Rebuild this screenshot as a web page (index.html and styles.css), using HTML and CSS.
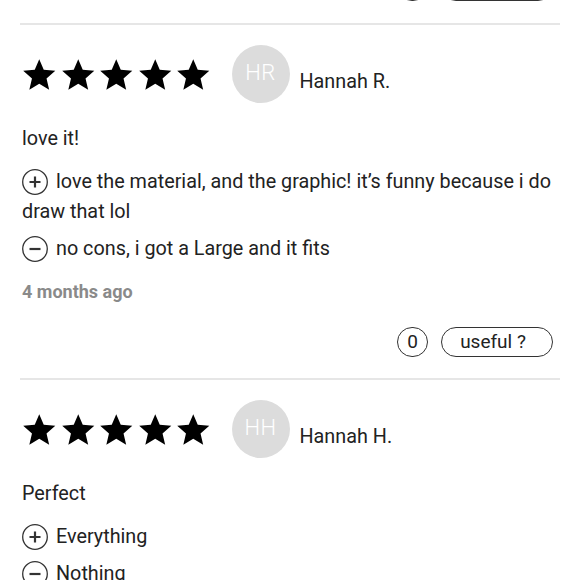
FILE: index.html
```html
<!DOCTYPE html>
<html>
<head>
<meta charset="utf-8">
<link rel="stylesheet" href="styles.css">
</head>
<body>
<div class="list">
  <div class="tail">
    <div class="actions">
      <span class="count">0</span>
      <span class="useful">useful ?</span>
    </div>
  </div>

  <div class="review">
    <div class="head">
      <div class="stars">
        <svg viewBox="0 0 24 24"><path d="M12 17.27L18.18 21l-1.64-7.03L22 9.24l-7.19-.61L12 2 9.19 8.63 2 9.24l5.46 4.73L5.82 21z"/></svg>
        <svg viewBox="0 0 24 24"><path d="M12 17.27L18.18 21l-1.64-7.03L22 9.24l-7.19-.61L12 2 9.19 8.63 2 9.24l5.46 4.73L5.82 21z"/></svg>
        <svg viewBox="0 0 24 24"><path d="M12 17.27L18.18 21l-1.64-7.03L22 9.24l-7.19-.61L12 2 9.19 8.63 2 9.24l5.46 4.73L5.82 21z"/></svg>
        <svg viewBox="0 0 24 24"><path d="M12 17.27L18.18 21l-1.64-7.03L22 9.24l-7.19-.61L12 2 9.19 8.63 2 9.24l5.46 4.73L5.82 21z"/></svg>
        <svg viewBox="0 0 24 24"><path d="M12 17.27L18.18 21l-1.64-7.03L22 9.24l-7.19-.61L12 2 9.19 8.63 2 9.24l5.46 4.73L5.82 21z"/></svg>
      </div>
      <div class="avatar">HR</div>
      <div class="name">Hannah R.</div>
    </div>
    <p class="title">love it!</p>
    <p class="point"><svg class="sign" viewBox="0 0 30 30"><circle cx="15" cy="15" r="12.3"/><path d="M15 9.5v11M9.5 15h11"/></svg>love the material, and the graphic! it’s funny because i do draw that lol</p>
    <p class="point"><svg class="sign" viewBox="0 0 30 30"><circle cx="15" cy="15" r="12.3"/><path d="M9.5 15h11"/></svg>no cons, i got a Large and it fits</p>
    <p class="date">4 months ago</p>
    <div class="actions">
      <span class="count">0</span>
      <span class="useful">useful ?</span>
    </div>
  </div>

  <div class="review">
    <div class="head">
      <div class="stars">
        <svg viewBox="0 0 24 24"><path d="M12 17.27L18.18 21l-1.64-7.03L22 9.24l-7.19-.61L12 2 9.19 8.63 2 9.24l5.46 4.73L5.82 21z"/></svg>
        <svg viewBox="0 0 24 24"><path d="M12 17.27L18.18 21l-1.64-7.03L22 9.24l-7.19-.61L12 2 9.19 8.63 2 9.24l5.46 4.73L5.82 21z"/></svg>
        <svg viewBox="0 0 24 24"><path d="M12 17.27L18.18 21l-1.64-7.03L22 9.24l-7.19-.61L12 2 9.19 8.63 2 9.24l5.46 4.73L5.82 21z"/></svg>
        <svg viewBox="0 0 24 24"><path d="M12 17.27L18.18 21l-1.64-7.03L22 9.24l-7.19-.61L12 2 9.19 8.63 2 9.24l5.46 4.73L5.82 21z"/></svg>
        <svg viewBox="0 0 24 24"><path d="M12 17.27L18.18 21l-1.64-7.03L22 9.24l-7.19-.61L12 2 9.19 8.63 2 9.24l5.46 4.73L5.82 21z"/></svg>
      </div>
      <div class="avatar">HH</div>
      <div class="name">Hannah H.</div>
    </div>
    <p class="title">Perfect</p>
    <p class="point"><svg class="sign" viewBox="0 0 30 30"><circle cx="15" cy="15" r="12.3"/><path d="M15 9.5v11M9.5 15h11"/></svg>Everything</p>
    <p class="point"><svg class="sign" viewBox="0 0 30 30"><circle cx="15" cy="15" r="12.3"/><path d="M9.5 15h11"/></svg>Nothing</p>
    <p class="date">4 months ago</p>
  </div>
</div>
</body>
</html>
```
FILE: styles.css
```css
html, body {
  margin: 0;
  padding: 0;
  background: #fff;
  overflow: hidden;
}
body {
  font-family: Roboto, "Liberation Sans", sans-serif;
  color: #222;
  font-size: 19.8px;
  line-height: 30px;
}
.list {
  margin: 0 20px;
}
.tail {
  margin-top: -29px;
  padding-bottom: 22px;
}
.review {
  border-top: 2px solid #e6e6e6;
  padding-bottom: 21px;
}
.head {
  display: flex;
  align-items: center;
  padding-top: 20px;
  height: 58px;
}
.stars {
  display: flex;
  margin-top: 2px;
}
.stars svg {
  width: 38.5px;
  height: 38.5px;
  fill: #000;
  display: block;
}
.avatar {
  width: 58px;
  height: 58px;
  border-radius: 50%;
  background: #dcdcdc;
  color: #fff;
  font-size: 22px;
  font-weight: 300;
  display: flex;
  align-items: center;
  justify-content: center;
  padding-bottom: 2px;
  box-sizing: border-box;
  margin-left: 19px;
  letter-spacing: 0.5px;
}
.name {
  margin-left: 10px;
  margin-top: 16px;
  font-size: 19.8px;
}
.title {
  margin: 21px 0 0 2px;
}
.point {
  margin: 13px 0 0 2px;
}
.point + .point {
  margin-top: 7px;
}
.sign {
  width: 30px;
  height: 30px;
  vertical-align: top;
  margin: 0 6px 0 -2px;
  fill: none;
  stroke: #333;
}
.sign circle {
  stroke-width: 1.3;
}
.sign path {
  stroke-width: 2.2;
}
.date {
  margin: 13px 0 0 2px;
  font-size: 18px;
  font-weight: 700;
  color: #8a8a8a;
}
.actions {
  display: flex;
  justify-content: flex-end;
  gap: 13px;
  margin-top: 20px;
  padding-right: 7px;
}
.tail .actions {
  margin-top: 0;
}
.count, .useful {
  height: 30px;
  box-sizing: border-box;
  border: 1px solid #333;
  border-radius: 15px;
  display: flex;
  align-items: center;
  justify-content: center;
  font-size: 19px;
}
.count {
  width: 31px;
}
.useful {
  width: 112px;
  padding-right: 8px;
}
```
